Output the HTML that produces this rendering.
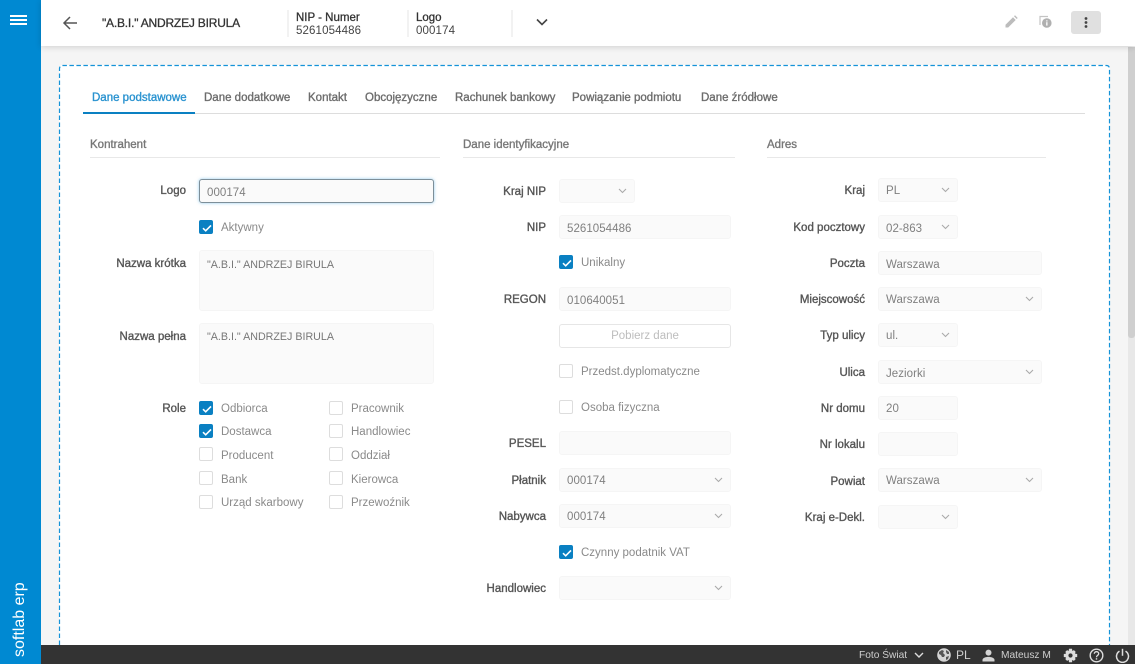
<!DOCTYPE html>
<html lang="pl"><head><meta charset="utf-8"><title>Softlab ERP</title>
<style>
*{box-sizing:border-box}
html,body{margin:0;padding:0;width:1135px;height:664px;overflow:hidden;background:#f5f5f5;font-family:"Liberation Sans",Arial,sans-serif;font-size:11.5px;color:#333}
#root{position:relative;width:1135px;height:664px;overflow:hidden}
.a{position:absolute;white-space:nowrap}
#side{left:0;top:0;width:41px;height:664px;background:#0089d2;overflow:hidden}
#head{left:41px;top:0;width:1094px;height:46px;background:#fff;box-shadow:0 1px 6px rgba(0,0,0,.16)}
#card{left:59px;top:65px;width:1051px;height:580px;background:#fff;border-radius:3px}
#foot{left:41px;top:645px;width:1094px;height:19px;background:#333}
.t{top:91px;line-height:15px;font-size:11.5px;color:#6d6d6d;-webkit-text-stroke:.35px #6d6d6d}
.s{top:138px;line-height:15px;font-size:11.5px;color:#777;-webkit-text-stroke:.35px #777}
.h{height:1px;top:157px;background:#e8e8e8}
.l{height:24px;line-height:26px;color:#555;-webkit-text-stroke:.35px #555;text-align:right;font-size:11.5px}
.i{height:24px;line-height:26px;background:#fafafa;border:1px solid #f5f5f5;border-radius:3px;padding-left:7px;color:#808080;font-size:11.5px;letter-spacing:.05px}
.ta{line-height:27px;font-size:10.7px;letter-spacing:0;color:#777}
.c{width:14px;height:14px;border:1px solid #ddd;border-radius:2px;background:#fff}
.c.on{background:#0a80c2;border-color:#0a80c2}
.c svg{position:absolute;left:1px;top:1px}
.x{height:14px;line-height:16px;color:#8a8a8a;font-size:11.5px}
.d{position:absolute;right:7px;top:8px}
.ft{color:#cfcfcf;height:17px;line-height:17px;top:647px;font-size:10.2px}
</style></head><body><div id="root">
<div class="a" id="side">
<div class="a" style="left:10px;top:15px;width:17px;height:2px;background:#fff"></div>
<div class="a" style="left:10px;top:19px;width:17px;height:2px;background:#fff"></div>
<div class="a" style="left:10px;top:23px;width:17px;height:2px;background:#fff"></div>
<div class="a" style="left:-24px;top:603px;width:88px;height:20px;line-height:20px;color:#fff;font-size:16px;text-align:left;transform:rotate(-90deg);transform-origin:center">softlab erp</div>
</div>
<div class="a" id="card"></div>
<svg class="a" style="left:58px;top:64px" width="1054" height="581" viewBox="0 0 1054 581"><path d="M1.5 581V4.5a3 3 0 0 1 3-3H1048.5a3 3 0 0 1 3 3V581" fill="none" stroke="#1593d8" stroke-width="1.2" stroke-dasharray="4.5 2.5"/></svg>
<div class="a" style="left:1128px;top:47px;width:7px;height:598px;background:#e8e8e8"></div>
<div class="a" style="left:1128px;top:47px;width:7px;height:291px;background:#cfcfcf;border-radius:0 0 3px 3px"></div>
<div class="a" id="head"></div>

<svg class="a" style="left:62px;top:15px" width="16" height="16" viewBox="0 0 16 16"><path d="M15 8H2M8 2L2 8l6 6" fill="none" stroke="#555" stroke-width="1.5"/></svg>
<div class="a" style="left:102px;top:16px;line-height:15px;font-size:12px;color:#333;-webkit-text-stroke:.3px #333;letter-spacing:-.2px">"A.B.I." ANDRZEJ BIRULA</div>
<div class="a" style="left:287px;top:10px;width:2px;height:27px;background:#f2f2f2"></div>
<div class="a" style="left:296px;top:11px;line-height:14px;font-size:11.5px;color:#333;-webkit-text-stroke:.3px #333">NIP - Numer</div>
<div class="a" style="left:296px;top:24px;line-height:14px;font-size:11.5px;color:#444;letter-spacing:.12px">5261054486</div>
<div class="a" style="left:407px;top:10px;width:2px;height:27px;background:#f2f2f2"></div>
<div class="a" style="left:416px;top:11px;line-height:14px;font-size:11.5px;color:#333;-webkit-text-stroke:.3px #333">Logo</div>
<div class="a" style="left:416px;top:24px;line-height:14px;font-size:11.5px;color:#444;letter-spacing:.12px">000174</div>
<div class="a" style="left:511px;top:10px;width:2px;height:27px;background:#f2f2f2"></div>
<svg class="a" style="left:536px;top:18px" width="12" height="9" viewBox="0 0 12 9"><path d="M1 1.5l5 5 5-5" fill="none" stroke="#444" stroke-width="1.6"/></svg>

<svg class="a" style="left:1005px;top:15px" width="13" height="13" viewBox="0 0 13 13"><path d="M0.5 12.5v-2.7L8 2.3l2.7 2.7-7.5 7.5zM9 1.3l1-1 2.7 2.7-1 1z" fill="#bcbcbc"/></svg>
<svg class="a" style="left:1039px;top:15px" width="14" height="14" viewBox="0 0 14 14"><path d="M1 10V1.5h8" fill="none" stroke="#c4c4c4" stroke-width="1.2"/><circle cx="7.8" cy="8" r="4.8" fill="#b0b0b0"/><rect x="7.2" y="7.2" width="1.3" height="3.4" fill="#fff"/><rect x="7.2" y="5.3" width="1.3" height="1.2" fill="#fff"/></svg>
<div class="a" style="left:1071px;top:11px;width:30px;height:23px;background:#e0e0e0;border-radius:3px"></div>
<svg class="a" style="left:1084px;top:16px" width="4" height="13" viewBox="0 0 4 13"><circle cx="2" cy="2.5" r="1.4" fill="#444"/><circle cx="2" cy="6.5" r="1.4" fill="#444"/><circle cx="2" cy="10.5" r="1.4" fill="#444"/></svg>

<div class="a t" style="left:92px;color:#2a93d0;-webkit-text-stroke:.35px #2a93d0">Dane podstawowe</div>
<div class="a t" style="left:204px">Dane dodatkowe</div>
<div class="a t" style="left:308px">Kontakt</div>
<div class="a t" style="left:365px">Obcojęzyczne</div>
<div class="a t" style="left:455px">Rachunek bankowy</div>
<div class="a t" style="left:572px">Powiązanie podmiotu</div>
<div class="a t" style="left:701px">Dane źródłowe</div>
<div class="a" style="left:83px;top:113px;width:1002px;height:1px;background:#ddd"></div>
<div class="a" style="left:83px;top:112px;width:112px;height:2px;background:#0a80c2"></div>

<div class="a s" style="left:90px">Kontrahent</div><div class="a h" style="left:90px;width:350px"></div>
<div class="a s" style="left:463px">Dane identyfikacyjne</div><div class="a h" style="left:463px;width:272px"></div>
<div class="a s" style="left:767px">Adres</div><div class="a h" style="left:767px;width:279px"></div>

<!-- left column -->
<div class="a l" style="right:949px;top:178px">Logo</div>
<div class="a i" style="left:199px;top:179px;width:235px;border:1px solid #7d8f99;box-shadow:0 0 3px rgba(60,160,220,.55)">000174</div>
<div class="a c on" style="left:199px;top:220px"><svg width="12" height="12" viewBox="0 0 12 12"><path d="M2 6.2l2.7 2.6L10 3.4" fill="none" stroke="#fff" stroke-width="1.6"/></svg></div>
<div class="a x" style="left:221px;top:220px">Aktywny</div>
<div class="a l" style="right:949px;top:251px">Nazwa krótka</div>
<div class="a i ta" style="left:199px;top:250px;width:235px;height:61px;line-height:29px">"A.B.I." ANDRZEJ BIRULA</div>
<div class="a l" style="right:949px;top:324px">Nazwa pełna</div>
<div class="a i ta" style="left:199px;top:323px;width:235px;height:61px">"A.B.I." ANDRZEJ BIRULA</div>
<div class="a l" style="right:949px;top:396px">Role</div>
<div class="a c on" style="left:199px;top:401px"><svg width="12" height="12" viewBox="0 0 12 12"><path d="M2 6.2l2.7 2.6L10 3.4" fill="none" stroke="#fff" stroke-width="1.6"/></svg></div><div class="a x" style="left:221px;top:401px">Odbiorca</div>
<div class="a c on" style="left:199px;top:424px"><svg width="12" height="12" viewBox="0 0 12 12"><path d="M2 6.2l2.7 2.6L10 3.4" fill="none" stroke="#fff" stroke-width="1.6"/></svg></div><div class="a x" style="left:221px;top:424px">Dostawca</div>
<div class="a c" style="left:199px;top:447px"></div><div class="a x" style="left:221px;top:448px">Producent</div>
<div class="a c" style="left:199px;top:471px"></div><div class="a x" style="left:221px;top:472px">Bank</div>
<div class="a c" style="left:199px;top:495px"></div><div class="a x" style="left:221px;top:495px">Urząd skarbowy</div>
<div class="a c" style="left:329px;top:401px"></div><div class="a x" style="left:351px;top:401px">Pracownik</div>
<div class="a c" style="left:329px;top:424px"></div><div class="a x" style="left:351px;top:424px">Handlowiec</div>
<div class="a c" style="left:329px;top:447px"></div><div class="a x" style="left:351px;top:448px">Oddział</div>
<div class="a c" style="left:329px;top:471px"></div><div class="a x" style="left:351px;top:472px">Kierowca</div>
<div class="a c" style="left:329px;top:495px"></div><div class="a x" style="left:351px;top:495px">Przewoźnik</div>

<!-- middle column -->
<div class="a l" style="right:589px;top:179px">Kraj NIP</div>
<div class="a i" style="left:559px;top:179px;width:76px"><svg class="d" width="9" height="6" viewBox="0 0 9 6"><path d="M1 1l3.5 3.5L8 1" fill="none" stroke="#aaa" stroke-width="1.1"/></svg></div>
<div class="a l" style="right:589px;top:215px">NIP</div>
<div class="a i" style="left:559px;top:215px;width:172px">5261054486</div>
<div class="a c on" style="left:559px;top:255px"><svg width="12" height="12" viewBox="0 0 12 12"><path d="M2 6.2l2.7 2.6L10 3.4" fill="none" stroke="#fff" stroke-width="1.6"/></svg></div><div class="a x" style="left:581px;top:255px">Unikalny</div>
<div class="a l" style="right:589px;top:287px">REGON</div>
<div class="a i" style="left:559px;top:287px;width:172px">010640051</div>
<div class="a" style="left:559px;top:324px;width:172px;height:24px;line-height:22px;border:1px solid #e6e6e6;border-radius:3px;text-align:center;color:#bdbdbd;font-size:11.5px">Pobierz dane</div>
<div class="a c" style="left:559px;top:364px"></div><div class="a x" style="left:581px;top:364px">Przedst.dyplomatyczne</div>
<div class="a c" style="left:559px;top:400px"></div><div class="a x" style="left:581px;top:400px">Osoba fizyczna</div>
<div class="a l" style="right:589px;top:431px">PESEL</div>
<div class="a i" style="left:559px;top:431px;width:172px"></div>
<div class="a l" style="right:589px;top:468px">Płatnik</div>
<div class="a i" style="left:559px;top:468px;width:172px;line-height:25px">000174<svg class="d" width="9" height="6" viewBox="0 0 9 6"><path d="M1 1l3.5 3.5L8 1" fill="none" stroke="#aaa" stroke-width="1.1"/></svg></div>
<div class="a l" style="right:589px;top:504px">Nabywca</div>
<div class="a i" style="left:559px;top:504px;width:172px;line-height:25px">000174<svg class="d" width="9" height="6" viewBox="0 0 9 6"><path d="M1 1l3.5 3.5L8 1" fill="none" stroke="#aaa" stroke-width="1.1"/></svg></div>
<div class="a c on" style="left:559px;top:545px"><svg width="12" height="12" viewBox="0 0 12 12"><path d="M2 6.2l2.7 2.6L10 3.4" fill="none" stroke="#fff" stroke-width="1.6"/></svg></div><div class="a x" style="left:581px;top:545px">Czynny podatnik VAT</div>
<div class="a l" style="right:589px;top:576px">Handlowiec</div>
<div class="a i" style="left:559px;top:576px;width:172px"><svg class="d" width="9" height="6" viewBox="0 0 9 6"><path d="M1 1l3.5 3.5L8 1" fill="none" stroke="#aaa" stroke-width="1.1"/></svg></div>

<!-- right column -->
<div class="a l" style="right:270px;top:178px">Kraj</div>
<div class="a i" style="left:878px;top:178px;width:80px;line-height:25px">PL<svg class="d" width="9" height="6" viewBox="0 0 9 6"><path d="M1 1l3.5 3.5L8 1" fill="none" stroke="#aaa" stroke-width="1.1"/></svg></div>
<div class="a l" style="right:270px;top:215px">Kod pocztowy</div>
<div class="a i" style="left:878px;top:215px;width:80px">02-863<svg class="d" width="9" height="6" viewBox="0 0 9 6"><path d="M1 1l3.5 3.5L8 1" fill="none" stroke="#aaa" stroke-width="1.1"/></svg></div>
<div class="a l" style="right:270px;top:251px">Poczta</div>
<div class="a i" style="left:878px;top:251px;width:164px">Warszawa</div>
<div class="a l" style="right:270px;top:287px">Miejscowość</div>
<div class="a i" style="left:878px;top:287px;width:164px;line-height:25px">Warszawa<svg class="d" width="9" height="6" viewBox="0 0 9 6"><path d="M1 1l3.5 3.5L8 1" fill="none" stroke="#aaa" stroke-width="1.1"/></svg></div>
<div class="a l" style="right:270px;top:323px">Typ ulicy</div>
<div class="a i" style="left:878px;top:323px;width:80px;line-height:25px">ul.<svg class="d" width="9" height="6" viewBox="0 0 9 6"><path d="M1 1l3.5 3.5L8 1" fill="none" stroke="#aaa" stroke-width="1.1"/></svg></div>
<div class="a l" style="right:270px;top:360px">Ulica</div>
<div class="a i" style="left:878px;top:360px;width:164px">Jeziorki<svg class="d" width="9" height="6" viewBox="0 0 9 6"><path d="M1 1l3.5 3.5L8 1" fill="none" stroke="#aaa" stroke-width="1.1"/></svg></div>
<div class="a l" style="right:270px;top:396px">Nr domu</div>
<div class="a i" style="left:878px;top:396px;width:80px;line-height:25px">20</div>
<div class="a l" style="right:270px;top:432px">Nr lokalu</div>
<div class="a i" style="left:878px;top:432px;width:80px"></div>
<div class="a l" style="right:270px;top:469px">Powiat</div>
<div class="a i" style="left:878px;top:468px;width:164px;line-height:25px">Warszawa<svg class="d" width="9" height="6" viewBox="0 0 9 6"><path d="M1 1l3.5 3.5L8 1" fill="none" stroke="#aaa" stroke-width="1.1"/></svg></div>
<div class="a l" style="right:270px;top:505px">Kraj e-Dekl.</div>
<div class="a i" style="left:878px;top:505px;width:80px"><svg class="d" width="9" height="6" viewBox="0 0 9 6"><path d="M1 1l3.5 3.5L8 1" fill="none" stroke="#aaa" stroke-width="1.1"/></svg></div>

<!-- footer -->
<div class="a" id="foot"></div>
<div class="a ft" style="left:859px">Foto Świat</div>
<svg class="a" style="left:914px;top:652px" width="10" height="7" viewBox="0 0 10 7"><path d="M1 1l4 4 4-4" fill="none" stroke="#ddd" stroke-width="1.4"/></svg>
<svg class="a" style="left:937px;top:648px" width="14" height="14" viewBox="0 0 14 14"><circle cx="7" cy="7" r="6.8" fill="#d4d4d4"/><path d="M2 4l3-2 2 1-1 2 2 2-1 2-2 0-1-2-2-1zM9 2l3 2 0 2-2 0-1-2zM9 9l3-1-1 3-2 1z" fill="#555"/></svg>
<div class="a ft" style="left:956px;font-size:12px">PL</div>
<svg class="a" style="left:982px;top:649px" width="13" height="13" viewBox="0 0 13 13"><circle cx="6.5" cy="3.6" r="3" fill="#d4d4d4"/><path d="M0.5 12.5v-1.6c0-2 3.5-3 6-3s6 1 6 3v1.6z" fill="#d4d4d4"/></svg>
<div class="a ft" style="left:1001px">Mateusz M</div>
<svg class="a" style="left:1063px;top:648px" width="15" height="15" viewBox="0 0 15 15"><circle cx="7.5" cy="7.5" r="3.6" fill="none" stroke="#ddd" stroke-width="3"/><path d="M6 .8h3l.4 2.4H5.6zM6 14.2h3l.4-2.4H5.6zM.8 6v3l2.4.4V5.6zM14.2 6v3l-2.4.4V5.6zM2.2 4l2-2 1.5 1.6-2 2zM12.8 4l-2-2-1.5 1.6 2 2zM2.2 11l2 2 1.5-1.6-2-2zM12.8 11l-2 2-1.5-1.6 2-2z" fill="#ddd"/></svg>
<svg class="a" style="left:1089px;top:648px" width="15" height="15" viewBox="0 0 15 15"><circle cx="7.5" cy="7.5" r="6.3" fill="none" stroke="#ddd" stroke-width="1.4"/><path d="M5.3 5.8c0-1.3 1-2.1 2.2-2.1s2.2.8 2.2 2c0 1.7-2.2 1.7-2.2 3.5" fill="none" stroke="#ddd" stroke-width="1.3"/><rect x="6.8" y="10.2" width="1.4" height="1.4" fill="#ddd"/></svg>
<svg class="a" style="left:1115px;top:648px" width="15" height="15" viewBox="0 0 15 15"><path d="M4.5 3.2a6 6 0 1 0 6 0" fill="none" stroke="#ddd" stroke-width="1.5"/><path d="M7.5 .8v7" stroke="#ddd" stroke-width="1.5"/></svg>
</div></body></html>
